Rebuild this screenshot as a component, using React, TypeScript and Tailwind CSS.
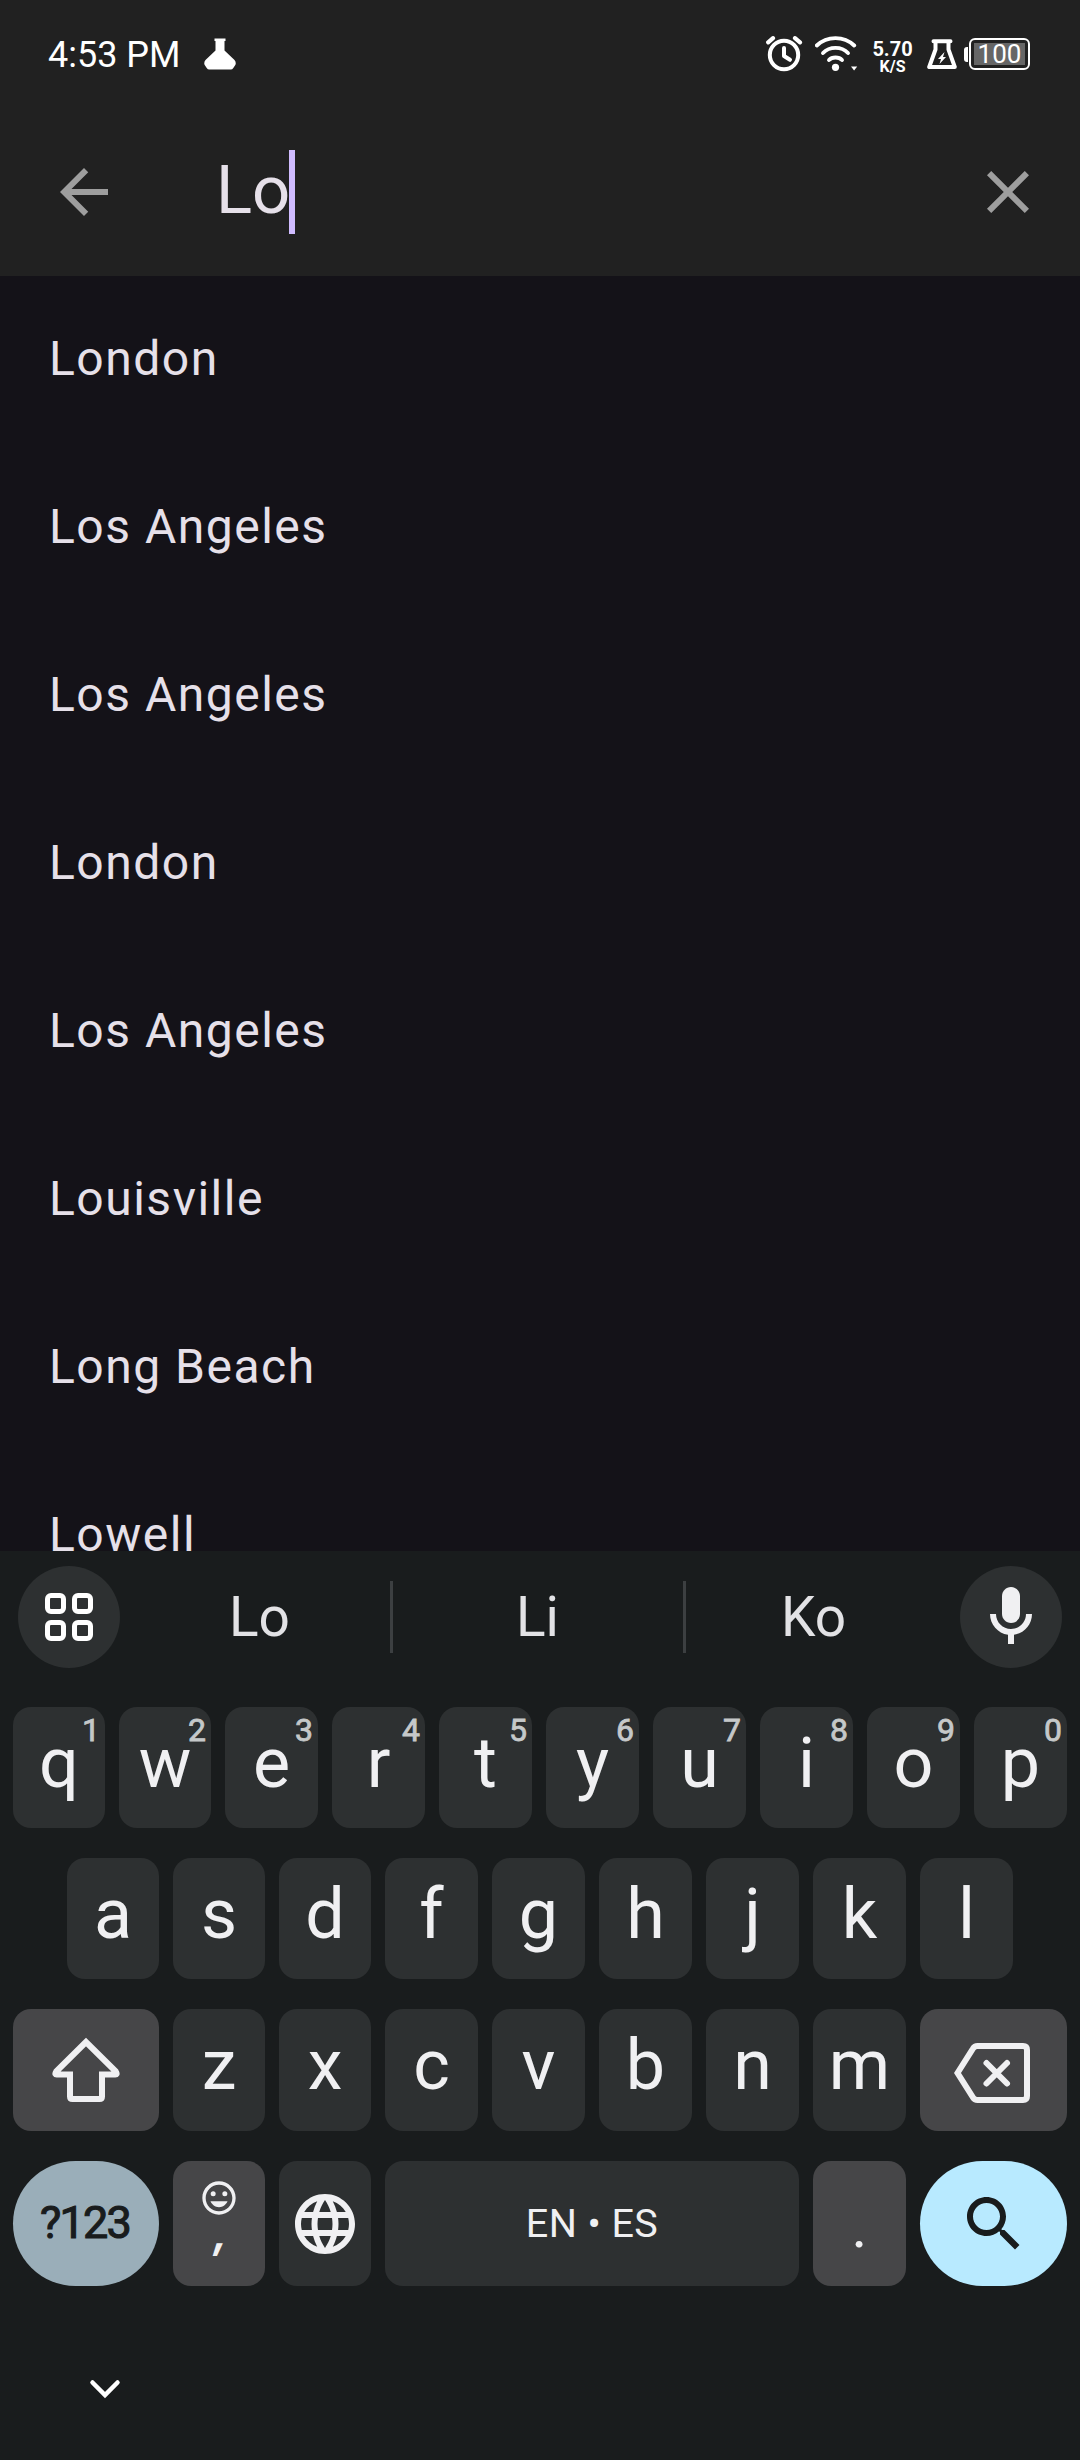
import React from "react";

const cities = [
  "London",
  "Los Angeles",
  "Los Angeles",
  "London",
  "Los Angeles",
  "Louisville",
  "Long Beach",
  "Lowell",
];

type KeyDef = { label: string; hint?: string; narrow?: boolean };

const topRow: KeyDef[] = [
  { label: "q", hint: "1", narrow: true },
  { label: "w", hint: "2", narrow: true },
  { label: "e", hint: "3" },
  { label: "r", hint: "4" },
  { label: "t", hint: "5" },
  { label: "y", hint: "6" },
  { label: "u", hint: "7" },
  { label: "i", hint: "8" },
  { label: "o", hint: "9" },
  { label: "p", hint: "0" },
];

const homeRow: KeyDef[] = [
  { label: "a", narrow: true },
  { label: "s", narrow: true },
  { label: "d", narrow: true },
  { label: "f" },
  { label: "g" },
  { label: "h" },
  { label: "j" },
  { label: "k" },
  { label: "l" },
];

const bottomRow: KeyDef[] = [
  { label: "z", narrow: true },
  { label: "x", narrow: true },
  { label: "c" },
  { label: "v" },
  { label: "b" },
  { label: "n" },
  { label: "m" },
];

function LetterKey({ label, hint, narrow }: KeyDef) {
  return (
    <button
      className={`relative flex h-full shrink-0 items-start justify-center rounded-[18px] bg-[#2d3031] ${
        narrow ? "w-[92px]" : "w-[93px]"
      }`}
    >
      <span className="text-[70px] leading-[112px] text-[#f0f0f2]">{label}</span>
      {hint && (
        <span className="absolute right-[5px] top-0 text-[32px] leading-[46px] text-[#c5c8c9] [-webkit-text-stroke:0.8px_#c5c8c9]">
          {hint}
        </span>
      )}
    </button>
  );
}

function StatusBar() {
  return (
    <div className="flex h-[108px] items-center justify-between pl-[48px] pr-[50px] text-white">
      <div className="flex items-center">
        <span className="pt-[2px] text-[36px] leading-[111px]">4:53 PM</span>
        <svg className="ml-[23px]" width="32" height="32" viewBox="0 0 32 32" fill="#fff">
          <path d="M10.5 0.5h11v2.5h-1v9.500l10 9.500q2 2.500.8 5l-2 3q-1 1.500-2.500 1.500H5.200q-1.500 0-2.500-1.500l-2-3q-1.200-2.500.8-5l10-9.500V3h-1z" />
        </svg>
      </div>
      <div className="flex items-center">
        <svg width="37" height="36" viewBox="0 0 37 36" fill="none" stroke="#fff">
          <circle cx="18" cy="19" r="14.200" strokeWidth="4" />
          <path d="M18 12v8l6 3.800" strokeWidth="4" strokeLinecap="round" strokeLinejoin="round" />
          <path d="M2.200 6.300L7 2.200M29 2.200l5 4.100" strokeWidth="4.200" strokeLinecap="round" />
        </svg>
        <svg className="ml-[12px]" width="43" height="36" viewBox="0 0 43 36" fill="none" stroke="#fff" strokeLinecap="round">
          <path d="M1.800 9.500C12-.4 29-.4 39.200 9.500" strokeWidth="3.900" />
          <path d="M8 17C14.500 10.200 26.500 10.200 33 17" strokeWidth="3.900" />
          <path d="M14 24C17 20.600 24 20.600 27 24" strokeWidth="3.900" />
          <circle cx="20.500" cy="31.300" r="3.600" fill="#fff" stroke="none" />
          <path d="M36 30.500h6.200l-3.100 4z" fill="#fff" stroke="none" />
        </svg>
        <div className="ml-[14px] flex w-[41px] flex-col items-center pt-[5px] font-bold">
          <span className="text-[20px] leading-[20px]">5.70</span>
          <span className="text-[16px] leading-[16px]">K/S</span>
        </div>
        <svg className="ml-[14px]" width="30" height="31" viewBox="0 0 30 31" fill="none" stroke="#fff" strokeLinejoin="round" strokeLinecap="round">
          <path d="M6.500 2.300h17M8.500 2.500v8L2.200 28h25.600L21.500 10.500v-8" strokeWidth="4" />
          <path d="M17.500 13l-6.500 7h3l-1.500 5 6.500-7h-3z" fill="#fff" stroke="none" />
        </svg>
        <div className="ml-[7px] flex items-center">
          <div className="h-[15px] w-[4px] rounded-l-[3px] bg-white" />
          <div className="ml-px flex h-[32px] w-[61px] rounded-[6px] border-2 border-white p-[3px]">
            <div className="flex h-full w-full items-center justify-center bg-[#666666]">
              <span className="text-[26px] leading-[22px]">100</span>
            </div>
          </div>
        </div>
      </div>
    </div>
  );
}

function SearchHeader() {
  return (
    <div className="flex h-[168px] items-center pl-[48px] pr-[36px]">
      <svg width="72" height="72" viewBox="0 0 24 24" fill="#9e9e9e">
        <path d="M20 11H7.830l5.590-5.590L12 4l-8 8 8 8 1.410-1.410L7.830 13H20v-2z" />
      </svg>
      <div className="ml-[96px] flex grow items-center">
        <span className="pb-[4px] text-[67px] leading-[80px] text-[#e6e0e9]">Lo</span>
        <span className="-ml-px h-[84px] w-[6px] bg-[#d0bcff]" />
      </div>
      <svg width="72" height="72" viewBox="0 0 24 24" fill="#9e9e9e">
        <path d="M19 6.410L17.590 5 12 10.590 6.410 5 5 6.410 10.590 12 5 17.590 6.410 19 12 13.410 17.590 19 19 17.590 13.410 12z" />
      </svg>
    </div>
  );
}

function SuggestionStrip() {
  return (
    <div className="flex h-[132px] items-center justify-between px-[18px] text-[55px] text-[#e2e2e5]">
      <button className="flex size-[102px] items-center justify-center rounded-full bg-[#2d3031]">
        <svg width="48" height="48" viewBox="0 0 48 48" fill="none" stroke="#fff" strokeWidth="5">
          <rect x="2.500" y="2.500" width="16" height="16" rx="3.500" />
          <rect x="29.500" y="2.500" width="16" height="16" rx="3.500" />
          <rect x="2.500" y="29.500" width="16" height="16" rx="3.500" />
          <rect x="29.500" y="29.500" width="16" height="16" rx="3.500" />
        </svg>
      </button>
      <div className="flex h-full grow items-center">
        <span className="w-[270px] pl-[9px] text-center">Lo</span>
        <span className="h-[72px] w-[3px] bg-[#3c3f41]" />
        <span className="w-[290px] pr-[1px] text-center">Li</span>
        <span className="h-[72px] w-[3px] bg-[#3c3f41]" />
        <span className="w-[258px] pr-[3px] text-center">Ko</span>
      </div>
      <button className="flex size-[102px] items-center justify-center rounded-full bg-[#2d3031]">
        <svg width="72" height="72" viewBox="0 0 24 24" fill="#f0f0f2">
          <path d="M12 14c1.660 0 3-1.340 3-3V5c0-1.660-1.340-3-3-3S9 3.340 9 5v6c0 1.660 1.340 3 3 3z" />
          <path d="M17 11c0 2.760-2.240 5-5 5s-5-2.240-5-5H5c0 3.530 2.610 6.430 6 6.920V21h2v-3.080c3.390-.49 6-3.390 6-6.920h-2z" />
        </svg>
      </button>
    </div>
  );
}

function Keyboard() {
  return (
    <div className="flex h-[909px] flex-col bg-[#191c1d]">
      <SuggestionStrip />

      <div className="mt-[24px] flex h-[121px] gap-[14px] px-[13px]">
        {topRow.map((k) => (
          <LetterKey key={k.label} {...k} />
        ))}
      </div>

      <div className="mt-[30px] flex h-[121px] gap-[14px] px-[67px]">
        {homeRow.map((k) => (
          <LetterKey key={k.label} {...k} />
        ))}
      </div>

      <div className="mt-[30px] flex h-[122px] gap-[14px] px-[13px]">
        <button className="flex w-[146px] items-center justify-center rounded-[18px] bg-[#464648]">
          <svg width="68" height="66" viewBox="0 0 68 66" fill="none" stroke="#f0f0f2" strokeWidth="6" strokeLinejoin="miter">
            <path d="M34 5L4.200 34.500Q2 38 5.500 37.500H18V59.500Q18 62 20.500 62H47.500Q50 62 50 59.500V37.500H62.500Q66 38 63.800 34.500Z" />
          </svg>
        </button>
        {bottomRow.map((k) => (
          <LetterKey key={k.label} {...k} />
        ))}
        <button className="flex w-[147px] items-center justify-center rounded-[18px] bg-[#464648]">
          <svg className="mr-[3px] mt-[6px]" width="76" height="60" viewBox="0 0 76 60" fill="none" stroke="#f0f0f2" strokeWidth="6">
            <path d="M3.500 30L19 5.500Q20.500 3 23.500 3H69Q73 3 73 7V53Q73 57 69 57H23.500Q20.500 57 19 54.500Z" />
            <path d="M32.500 20L53 40.500M53 20L32.500 40.500" strokeLinecap="round" />
          </svg>
        </button>
      </div>

      <div className="mt-[30px] flex h-[125px] gap-[14px] px-[13px]">
        <button className="flex w-[146px] items-start justify-center rounded-full bg-[#9aaeb9] pr-[2px] text-[45px] leading-[124px] tracking-[-1.800px] text-[#191c1d] [-webkit-text-stroke:1.100px_#191c1d]">
          ?123
        </button>
        <button className="flex w-[92px] flex-col items-center rounded-[18px] bg-[#464648] pt-[17px]">
          <svg width="40" height="40" viewBox="0 0 24 24" fill="#f0f0f2">
            <path d="M11.990 2C6.470 2 2 6.480 2 12s4.470 10 9.990 10C17.520 22 22 17.520 22 12S17.520 2 11.990 2zM12 20c-4.420 0-8-3.580-8-8s3.580-8 8-8 8 3.580 8 8-3.580 8-8 8z" />
            <circle cx="15.500" cy="9.500" r="1.500" />
            <circle cx="8.500" cy="9.500" r="1.500" />
            <path d="M12 17.500c2.330 0 4.310-1.460 5.110-3.500H6.890c.8 2.040 2.780 3.500 5.110 3.500z" />
          </svg>
          <span className="pl-[3px] font-['Inter',sans-serif] text-[42px] font-bold italic leading-[30px] text-[#f0f0f2]">,</span>
        </button>
        <button className="flex w-[92px] items-center justify-center rounded-[18px] bg-[#2d3031]">
          <svg width="72" height="72" viewBox="0 0 24 24" fill="#f0f0f2">
            <path d="M11.990 2C6.470 2 2 6.480 2 12s4.470 10 9.990 10C17.520 22 22 17.520 22 12S17.520 2 11.990 2zm6.930 6h-2.950c-.32-1.250-.78-2.450-1.380-3.560 1.840.63 3.370 1.910 4.330 3.560zM12 4.040c.83 1.200 1.480 2.530 1.910 3.960h-3.820c.43-1.430 1.080-2.760 1.910-3.960zM4.260 14C4.100 13.360 4 12.690 4 12s.1-1.360.26-2h3.380c-.08.66-.14 1.320-.14 2s.06 1.340.14 2H4.260zm.82 2h2.950c.32 1.250.78 2.450 1.380 3.560-1.840-.63-3.370-1.900-4.330-3.560zm2.950-8H5.080c.96-1.660 2.490-2.930 4.330-3.560C8.810 5.550 8.350 6.750 8.030 8zM12 19.960c-.83-1.200-1.480-2.530-1.910-3.960h3.820c-.43 1.430-1.080 2.760-1.910 3.960zM14.340 14H9.660c-.09-.66-.16-1.320-.16-2s.07-1.350.16-2h4.680c.09.65.16 1.320.16 2s-.07 1.340-.16 2zm.25 5.560c.6-1.110 1.060-2.310 1.380-3.560h2.950c-.96 1.650-2.490 2.930-4.330 3.560zM16.360 14c.08-.66.14-1.320.14-2s-.06-1.340-.14-2h3.380c.16.64.26 1.310.26 2s-.1 1.360-.26 2h-3.380z" />
          </svg>
        </button>
        <button className="flex w-[414px] items-start justify-center rounded-[18px] bg-[#2d3031] text-[39.500px] leading-[125px] tracking-[0.400px] text-[#f0f0f2]">
          EN • ES
        </button>
        <button className="flex w-[93px] items-start justify-center rounded-[18px] bg-[#464648] text-[60px] leading-[131px] text-[#f0f0f2]">
          .
        </button>
        <button className="flex w-[147px] items-center justify-center rounded-full bg-[#b8eaff]">
          <svg width="72" height="72" viewBox="0 0 24 24" fill="#191c1d">
            <path d="M15.500 14h-.79l-.28-.27C15.410 12.590 16 11.110 16 9.500 16 5.910 13.090 3 9.500 3S3 5.910 3 9.500 5.910 16 9.500 16c1.610 0 3.090-.59 4.230-1.570l.27.28v.79l5 4.990L20.490 19l-4.990-5zm-6 0C7.010 14 5 11.990 5 9.500S7.010 5 9.500 5 14 7.010 14 9.500 11.990 14 9.500 14z" />
          </svg>
        </button>
      </div>

      <div className="flex grow items-start pl-[89px] pt-[92px]">
        <svg width="32" height="22" viewBox="0 0 32 22" fill="none" stroke="#fff" strokeWidth="4.500" strokeLinecap="round">
          <path d="M3.500 4.500L16 17L28.500 4.500" />
        </svg>
      </div>
    </div>
  );
}

export default function App() {
  return (
    <div className="flex h-[2460px] w-[1080px] flex-col overflow-hidden bg-[#141218] font-['Roboto',sans-serif]">
      <header className="h-[276px] shrink-0 bg-[#212121]">
        <StatusBar />
        <SearchHeader />
      </header>
      <ul className="h-[1275px] shrink-0 overflow-hidden">
        {cities.map((city, i) => (
          <li key={i} className="h-[168px] px-[49px] text-[48px] leading-[165px] tracking-[1.500px] text-[#e6e0e9]">
            {city}
          </li>
        ))}
      </ul>
      <Keyboard />
    </div>
  );
}
